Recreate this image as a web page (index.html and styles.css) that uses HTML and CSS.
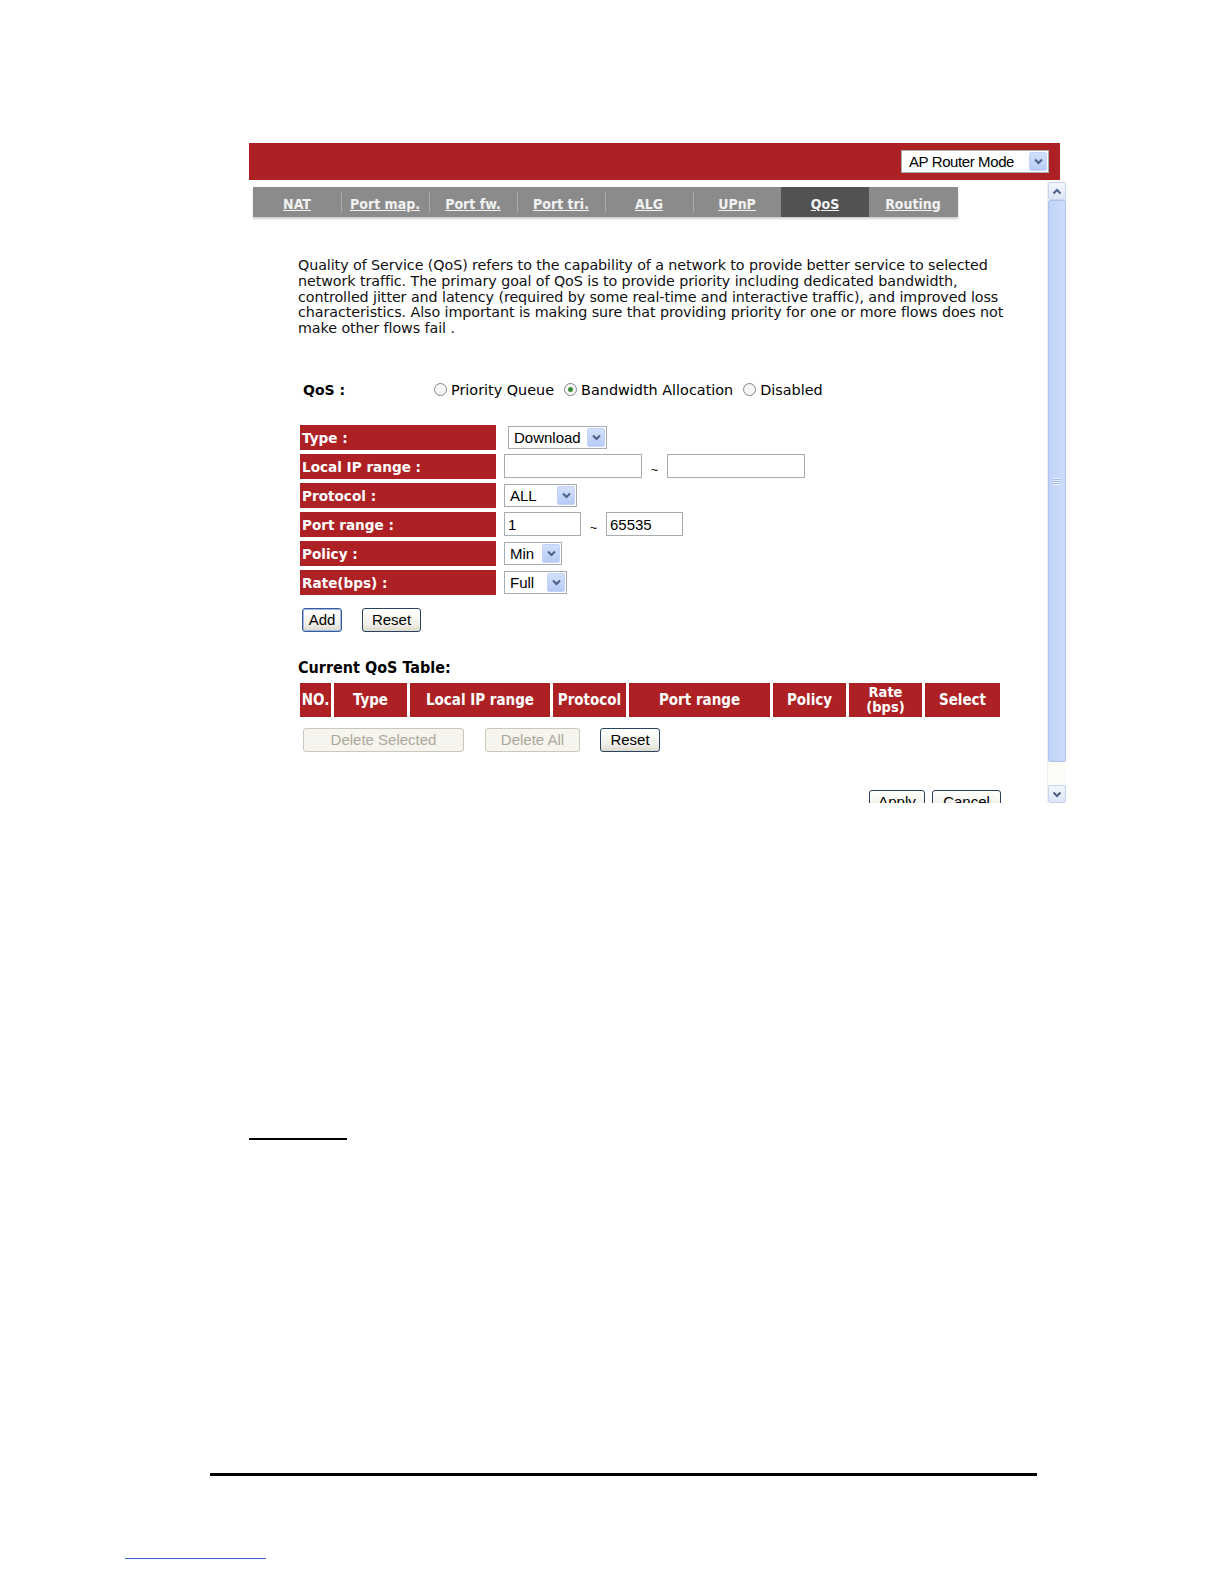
FILE: index.html
```html
<!DOCTYPE html>
<html>
<head>
<meta charset="utf-8">
<link rel="stylesheet" href="styles.css">
</head>
<body>
<div class="frame">
  <div class="topbar">
    <div class="select mode-select"><span class="sel-text">AP Router Mode</span><span class="sel-btn"><svg width="9" height="7" viewBox="0 0 9 7"><path d="M1 1.5 L4.5 5 L8 1.5" fill="none" stroke="#4d6185" stroke-width="2"/></svg></span></div>
  </div>
  <div class="viewport">
    <div class="content">
      <div class="tabs">
        <a class="tab">NAT</a>
        <a class="tab">Port map.</a>
        <a class="tab">Port fw.</a>
        <a class="tab">Port tri.</a>
        <a class="tab">ALG</a>
        <a class="tab">UPnP</a>
        <a class="tab active">QoS</a>
        <a class="tab">Routing</a>
      </div>
      <p class="intro">Quality of Service (QoS) refers to the capability of a network to provide better service to selected<br>network traffic. The primary goal of QoS is to provide priority including dedicated bandwidth,<br>controlled jitter and latency (required by some real-time and interactive traffic), and improved loss<br>characteristics. Also important is making sure that providing priority for one or more flows does not<br>make other flows fail .</p>

      <div class="qos-row">
        <span class="qos-label">QoS :</span>
        <span class="radios">
          <span class="radio"></span><span class="rlabel">Priority Queue</span>
          <span class="radio checked"></span><span class="rlabel">Bandwidth Allocation</span>
          <span class="radio"></span><span class="rlabel">Disabled</span>
        </span>
      </div>

      <div class="form">
        <div class="lbl">Type :</div>
        <div class="field"><div class="select sel-download"><span class="sel-text">Download</span><span class="sel-btn"><svg width="9" height="7" viewBox="0 0 9 7"><path d="M1 1.5 L4.5 5 L8 1.5" fill="none" stroke="#4d6185" stroke-width="2"/></svg></span></div></div>

        <div class="lbl">Local IP range :</div>
        <div class="field"><div class="input ip"></div><span class="tilde">~</span><div class="input ip"></div></div>

        <div class="lbl">Protocol :</div>
        <div class="field"><div class="select sel-protocol"><span class="sel-text">ALL</span><span class="sel-btn"><svg width="9" height="7" viewBox="0 0 9 7"><path d="M1 1.5 L4.5 5 L8 1.5" fill="none" stroke="#4d6185" stroke-width="2"/></svg></span></div></div>

        <div class="lbl">Port range :</div>
        <div class="field"><div class="input port">1</div><span class="tilde">~</span><div class="input port">65535</div></div>

        <div class="lbl">Policy :</div>
        <div class="field"><div class="select sel-policy"><span class="sel-text">Min</span><span class="sel-btn"><svg width="9" height="7" viewBox="0 0 9 7"><path d="M1 1.5 L4.5 5 L8 1.5" fill="none" stroke="#4d6185" stroke-width="2"/></svg></span></div></div>

        <div class="lbl">Rate(bps) :</div>
        <div class="field"><div class="select sel-rate"><span class="sel-text">Full</span><span class="sel-btn"><svg width="9" height="7" viewBox="0 0 9 7"><path d="M1 1.5 L4.5 5 L8 1.5" fill="none" stroke="#4d6185" stroke-width="2"/></svg></span></div></div>
      </div>

      <div class="btn-row first">
        <span class="btn btn-add">Add</span>
        <span class="btn btn-reset">Reset</span>
      </div>

      <div class="table-title">Current QoS Table:</div>
      <div class="qtable">
        <div class="th">NO.</div>
        <div class="th">Type</div>
        <div class="th">Local IP range</div>
        <div class="th">Protocol</div>
        <div class="th">Port range</div>
        <div class="th">Policy</div>
        <div class="th two">Rate<br>(bps)</div>
        <div class="th">Select</div>
      </div>

      <div class="btn-row second">
        <span class="btn disabled btn-delsel">Delete Selected</span>
        <span class="btn disabled btn-delall">Delete All</span>
        <span class="btn btn-reset2">Reset</span>
      </div>

      <div class="btn-row apply-row">
        <span class="btn btn-apply">Apply</span>
        <span class="btn btn-cancel">Cancel</span>
      </div>
    </div>
    <div class="scrollbar">
      <div class="sb-btn"><svg width="10" height="7" viewBox="0 0 10 7"><path d="M1.5 5.5 L5 2 L8.5 5.5" fill="none" stroke="#4d6185" stroke-width="2"/></svg></div>
      <div class="sb-track">
        <div class="sb-thumb"><span class="grip"></span></div>
      </div>
      <div class="sb-btn down"><svg width="10" height="7" viewBox="0 0 10 7"><path d="M1.5 1.5 L5 5 L8.5 1.5" fill="none" stroke="#4d6185" stroke-width="2"/></svg></div>
    </div>
  </div>
</div>
<div class="rule-short"></div>
<div class="rule-long"></div>
<div class="rule-blue"></div>
</body>
</html>
```

FILE: styles.css
```css
html, body {
  margin: 0;
  padding: 0;
  background: #ffffff;
}
body {
  font-family: "DejaVu Sans", sans-serif;
  color: #000;
  width: 1224px;
  height: 1584px;
  overflow: hidden;
}
.frame {
  margin: 143px 0 0 249px;
  width: 817px;
}
.topbar {
  width: 811px;
  height: 37px;
  background: #ad2125;
  display: flex;
  justify-content: flex-end;
  align-items: center;
  padding-right: 11px;
  box-sizing: border-box;
}
.select {
  display: flex;
  align-items: stretch;
  background: #fff;
  border: 1px solid #a5acb2;
  box-sizing: border-box;
  height: 23px;
  font-family: "Liberation Sans", Arial, sans-serif;
  font-size: 15px;
}
.sel-text {
  flex: 1;
  display: flex;
  align-items: center;
  padding-left: 5px;
  white-space: nowrap;
}
.sel-btn {
  width: 16px;
  margin: 1px;
  background: linear-gradient(#d3e0fb, #b7cbf5);
  border: 1px solid #c3d3fd;
  border-radius: 2px;
  display: flex;
  align-items: center;
  justify-content: center;
}
.mode-select {
  width: 148px;
  letter-spacing: -0.4px;
  padding-left: 2px;
}
.viewport {
  display: flex;
  margin-top: 2px;
  height: 621px;
}
.content {
  width: 799px;
  height: 621px;
  overflow: hidden;
}
.tabs {
  display: flex;
  margin: 5px 0 0 4px;
  width: 705px;
  height: 30px;
  background: #8b8b8b;
  box-shadow: 0 2px 2px #cfcfcf;
}
.tab {
  width: 88px;
  display: flex;
  align-items: center;
  justify-content: center;
  padding-top: 4px;
  box-sizing: border-box;
  color: #f2f2f2;
  font-family: "DejaVu Sans Condensed", sans-serif;
  font-weight: bold;
  font-size: 14px;
  text-decoration: underline;
  position: relative;
}
.tab + .tab::before {
  content: "";
  position: absolute;
  left: 0;
  top: 4px;
  bottom: 4px;
  width: 1px;
  background: #a9a9a9;
}
.tab.active {
  background: #525252;
}
.tab.active::before, .tab.active + .tab::before {
  display: none;
}
.intro {
  margin: 41px 0 0 49px;
  font-size: 14.3px;
  line-height: 15.8px;
  white-space: nowrap;
  color: #111;
  letter-spacing: -0.08px;
}
.qos-row {
  display: flex;
  align-items: center;
  height: 20px;
  margin: 43px 0 0 54px;
}
.qos-label {
  width: 131px;
  font-weight: bold;
  font-size: 14px;
}
.radios {
  display: flex;
  align-items: center;
  font-size: 14.4px;
}
.radio {
  width: 13px;
  height: 13px;
  border: 1px solid #7b8792;
  border-radius: 50%;
  box-sizing: border-box;
  background: #f6f6f6;
  margin-right: 4px;
  position: relative;
}
.radio.checked::after {
  content: "";
  position: absolute;
  left: 3px;
  top: 3px;
  width: 5px;
  height: 5px;
  border-radius: 50%;
  background: #3a8a3a;
}
.rlabel {
  margin-right: 10px;
}
.form {
  display: grid;
  grid-template-columns: 196px 1fr;
  column-gap: 8px;
  row-gap: 4px;
  margin: 25px 0 0 51px;
}
.lbl {
  background: #ad2125;
  color: #fff;
  font-weight: bold;
  font-size: 13.6px;
  height: 25px;
  display: flex;
  align-items: center;
  padding-left: 2px;
  padding-top: 2px;
  box-sizing: border-box;
  white-space: nowrap;
}
.field {
  display: flex;
  align-items: center;
  height: 25px;
}
.input {
  height: 24px;
  border: 1px solid #a5acb2;
  box-sizing: border-box;
  background: #fff;
  font-family: "Liberation Sans", Arial, sans-serif;
  font-size: 15px;
  display: flex;
  align-items: center;
  padding-left: 3px;
}
.input.ip { width: 138px; }
.input.port { width: 77px; }
.tilde {
  font-family: "Liberation Sans", Arial, sans-serif;
  font-size: 13px;
  width: 25px;
  text-align: center;
  padding-top: 6px;
}
.sel-download { width: 99px; margin-left: 4px; }
.sel-protocol { width: 73px; }
.sel-policy { width: 58px; }
.sel-rate { width: 63px; }
.btn-row {
  display: flex;
  align-items: flex-start;
}
.btn-row.first {
  margin: 13px 0 0 53px;
  gap: 20px;
}
.btn {
  height: 24px;
  border: 1px solid #27435f;
  border-radius: 3px;
  box-sizing: border-box;
  background: linear-gradient(#ffffff, #f0efe8 70%, #dcd9cc);
  font-family: "Liberation Sans", Arial, sans-serif;
  font-size: 15px;
  display: flex;
  align-items: center;
  justify-content: center;
  color: #000;
}
.btn-add {
  width: 40px;
  border-color: #3a5d9a;
  box-shadow: inset 0 0 0 1px #9fb8e8;
}
.btn-reset { width: 59px; }
.table-title {
  margin: 26px 0 0 49px;
  font-family: "DejaVu Sans Condensed", sans-serif;
  font-weight: bold;
  font-size: 16px;
}
.qtable {
  display: grid;
  grid-template-columns: 31px 73px 140px 73px 141px 73px 73px 75px;
  column-gap: 3px;
  margin: 6px 0 0 51px;
  width: 700px;
}
.th {
  background: #ad2125;
  color: #fff;
  font-family: "DejaVu Sans Condensed", sans-serif;
  font-weight: bold;
  font-size: 15px;
  height: 34px;
  display: flex;
  align-items: center;
  justify-content: center;
  text-align: center;
  white-space: nowrap;
}
.th.two {
  font-size: 14.5px;
  line-height: 15px;
}
.btn-row.second {
  margin: 11px 0 0 54px;
  gap: 21px;
}
.btn.disabled {
  border-color: #cac8bb;
  color: #aca899;
  background: #f5f4ee;
}
.btn-delsel { width: 161px; }
.btn-delall { width: 95px; margin-right: -1px; }
.btn-reset2 { width: 60px; }
.btn-row.apply-row {
  margin: 38px 0 0 620px;
  gap: 7px;
}
.btn-apply { width: 56px; }
.btn-cancel { width: 69px; }
.scrollbar {
  width: 18px;
  height: 621px;
  display: flex;
  flex-direction: column;
  background: #fdfdf7;
  border-left: 1px solid #eeeeea;
}
.sb-btn {
  height: 16px;
  display: flex;
  align-items: center;
  justify-content: center;
  background: linear-gradient(#f4f7fd, #dbe5f8);
  border: 1px solid #c6d4ee;
  border-radius: 2px;
}
.sb-btn.down {
  margin-top: auto;
}
.sb-track {
  flex: 1;
  display: flex;
  flex-direction: column;
  padding-bottom: 23px;
}
.sb-thumb {
  flex: 1;
  background: linear-gradient(90deg, #c1d3f8, #cddcfa);
  border: 1px solid #aec3ee;
  border-radius: 2px;
  display: flex;
  align-items: center;
  justify-content: center;
}
.grip {
  width: 8px;
  height: 7px;
  background: repeating-linear-gradient(#e6edfb 0 1px, #aabde8 1px 2px);
}
.rule-short {
  margin: 335px 0 0 249px;
  width: 98px;
  height: 2px;
  background: #000;
}
.rule-long {
  margin: 333px 0 0 210px;
  width: 827px;
  height: 3px;
  background: #000;
}
.rule-blue {
  margin: 82px 0 0 125px;
  width: 141px;
  height: 1px;
  background: #3d5fd0;
}
```
